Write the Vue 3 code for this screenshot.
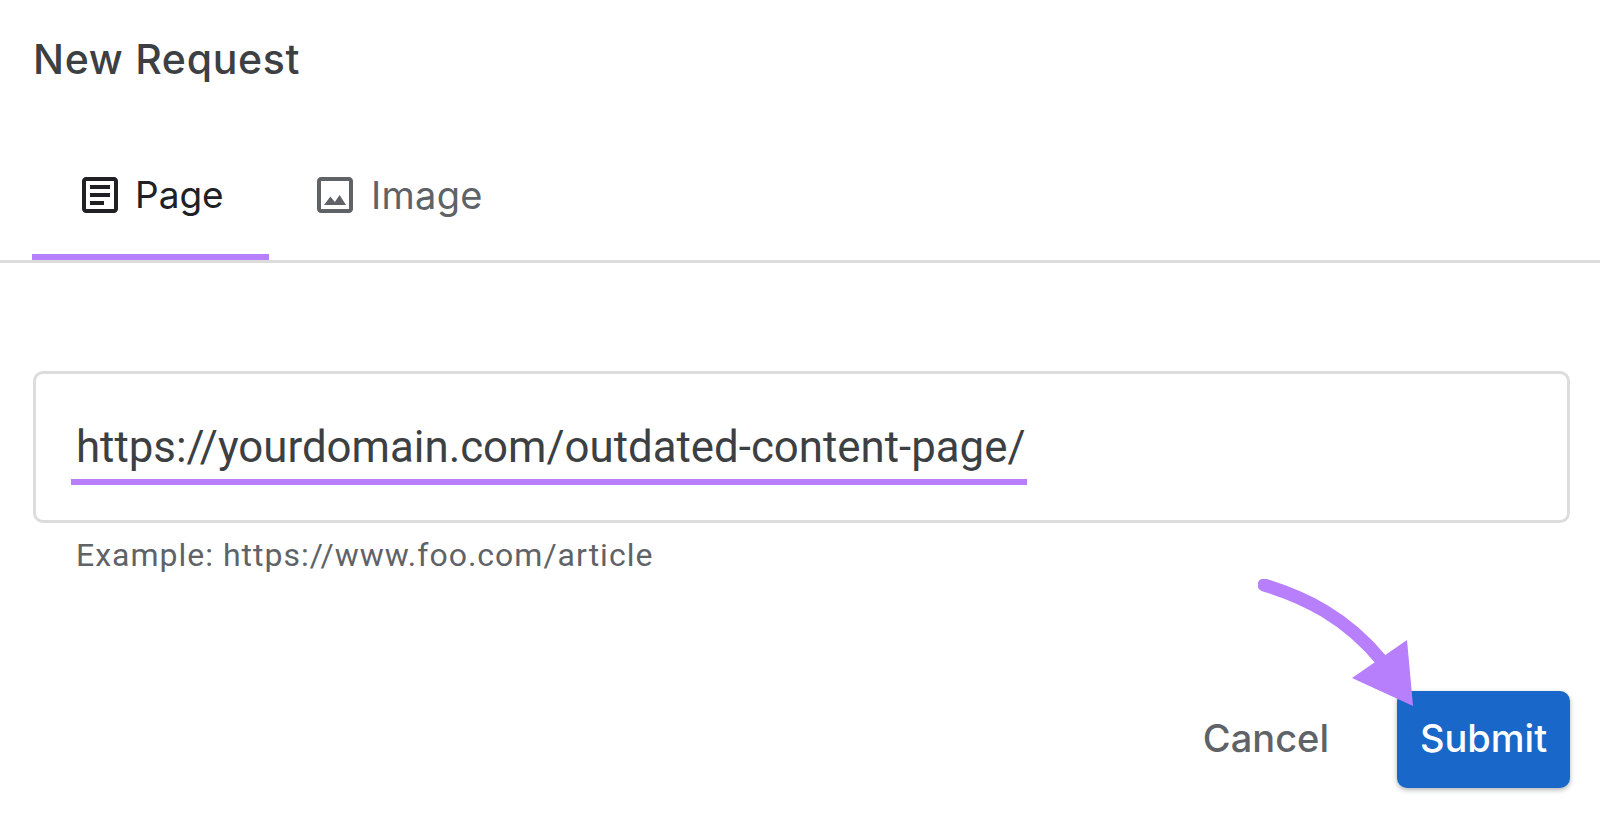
<script setup>
import { ref } from 'vue';

const url = ref('https://yourdomain.com/outdated-content-page/');
const activeTab = ref('page');
</script>

<template>
    <div class="dialog">
        <h1 class="title">New Request</h1>

        <div class="tabs">
            <button class="tab tab-page" :class="{ active: activeTab === 'page' }" @click="activeTab = 'page'">
                <svg class="tab-icon" viewBox="0 0 24 24" fill="currentColor">
                    <path d="M19 5v14H5V5h14m0-2H5c-1.1 0-2 .9-2 2v14c0 1.1.9 2 2 2h14c1.1 0 2-.9 2-2V5c0-1.1-.9-2-2-2z" />
                    <path d="M7 7h10v2H7zM7 11h10v2H7zM7 15h7v2H7z" />
                </svg>
                <span>Page</span>
            </button>
            <button class="tab tab-image" :class="{ active: activeTab === 'image' }" @click="activeTab = 'image'">
                <svg class="tab-icon" viewBox="0 0 24 24" fill="currentColor">
                    <path d="M19 5v14H5V5h14m0-2H5c-1.1 0-2 .9-2 2v14c0 1.1.9 2 2 2h14c1.1 0 2-.9 2-2V5c0-1.1-.9-2-2-2z" />
                    <path d="M6.5 17l3.2-4.2 2.2 2.7 2.4-3.5 3.2 5z" />
                </svg>
                <span>Image</span>
            </button>
        </div>

        <div class="field">
            <div class="input-box">
                <span class="input-text">{{ url }}</span>
            </div>
            <p class="hint">Example: https://www.foo.com/article</p>
        </div>

        <div class="actions">
            <button class="btn-cancel">Cancel</button>
            <button class="btn-submit">Submit</button>
            <!-- annotation arrow pointing at the button -->
            <svg class="arrow" viewBox="0 0 170 135" fill="none">
                <path d="M6 6C46 18 88 38 124 82" stroke="#b77ffb" stroke-width="13" stroke-linecap="round" />
                <path d="M155 127L149 61 94 99z" fill="#b77ffb" />
            </svg>
        </div>
    </div>
</template>

<style scoped>
.dialog {
    width: 1600px;
    height: 818px;
    background: #fff;
    font-family: Inter, sans-serif;
    color: #3c4043;
    overflow: hidden;
}

.title {
    margin: 0;
    padding: 32px 0 0 33px;
    height: 88px;
    font-size: 41px;
    line-height: 54px;
    font-weight: 500;
    letter-spacing: 0.7px;
    box-sizing: border-box;
}

.tabs {
    display: flex;
    height: 172px;
    padding: 0 0 0 32px;
    border-bottom: 3px solid #dcdcdc;
    box-sizing: content-box;
    align-items: flex-end;
}

.tab {
    display: flex;
    align-items: center;
    height: 100px;
    padding: 0 0 25px;
    border: 0;
    border-bottom: 6px solid transparent;
    background: none;
    font: inherit;
    font-size: 38px;
    font-weight: 400;
    color: #5f6368;
}

.tab-page {
    width: 237px;
    padding-left: 50px;
    font-size: 37px;
}

.tab-image {
    padding-left: 48px;
    letter-spacing: 0.3px;
}

.tab.active {
    color: #202124;
    border-bottom-color: #b77ffb;
}

.tab-icon {
    width: 48px;
    height: 48px;
    margin: 0 11px 0 -6px;
    flex-shrink: 0;
}

.tab-image .tab-icon {
    margin-right: 12px;
}

.field {
    padding: 108px 30px 0 33px;
}

.input-box {
    height: 152px;
    padding: 47px 0 0 35px;
    border: 3px solid #dcdcdc;
    border-radius: 10px;
    box-sizing: border-box;
}

.input-text {
    display: inline-block;
    padding: 0 2px 0 5px;
    height: 58px;
    font-family: Roboto, sans-serif;
    font-size: 43.8px;
    line-height: 52px;
    color: #3c4043;
    border-bottom: 6px solid #b77ffb;
    box-sizing: content-box;
}

.hint {
    margin: 14px 0 0 43px;
    font-family: Roboto, sans-serif;
    font-size: 32px;
    line-height: 36px;
    letter-spacing: 1px;
    color: #5f6368;
}

.actions {
    position: relative;
    display: flex;
    justify-content: flex-end;
    align-items: center;
    gap: 68px;
    margin-top: 118px;
    padding-right: 30px;
}

.btn-cancel {
    border: 0;
    background: none;
    padding: 0 0 4px;
    font: inherit;
    font-size: 38px;
    font-weight: 500;
    color: #5f6368;
}

.btn-submit {
    width: 173px;
    height: 97px;
    padding: 0 0 4px;
    border: 0;
    border-radius: 10px;
    background: #1967c8;
    box-shadow: 0 2px 5px rgba(60, 64, 67, 0.4);
    color: #fff;
    font: inherit;
    font-size: 38px;
    font-weight: 500;
}

.arrow {
    position: absolute;
    left: 1258px;
    top: -112px;
    width: 170px;
    height: 135px;
}
</style>

<style>
body {
    background: #fff;
}
</style>
